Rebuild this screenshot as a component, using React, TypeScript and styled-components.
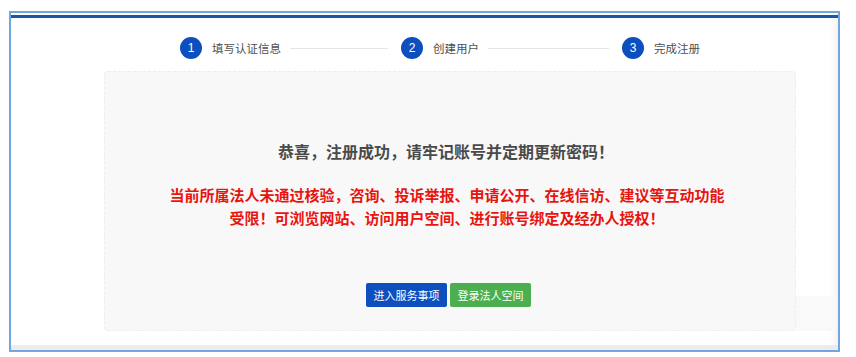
import {FC} from 'react';
import styled, {createGlobalStyle} from 'styled-components';

const GlobalStyle = createGlobalStyle`
    html, body {
        margin: 0;
        padding: 0;
        background: #ffffff;
        font-family: "Noto Sans CJK SC", "Liberation Sans", sans-serif;
    }
`;

// ramka strony
const Frame = styled.div`
    box-sizing: border-box;
    width: 831px;
    height: 341px;
    margin: 11px 0 0 9px;
    border: 2px solid #72a7de;
    background: #ffffff;
    box-shadow: inset -10px 0 10px -8px rgba(0, 0, 0, 0.07);
    display: flex;
    flex-direction: column;
    padding-top: 2px;
`;

const TopBar = styled.div`
    height: 3px;
    background: #1d56a6;
`;

// kroki rejestracji
const Steps = styled.div`
    display: flex;
    align-items: center;
    height: 22px;
    margin-top: 19px;
    padding-left: 169px;
`;

const Step = styled.div<{$last?: boolean}>`
    display: flex;
    align-items: center;
    width: ${p => (p.$last ? 'auto' : '221px')};
`;

const Circle = styled.span`
    width: 22px;
    height: 22px;
    border-radius: 50%;
    background: #0d4fbe;
    color: #ffffff;
    font-family: "Liberation Sans", Arial, sans-serif;
    font-size: 12px;
    display: flex;
    align-items: center;
    justify-content: center;
    flex-shrink: 0;
`;

const StepLabel = styled.span`
    margin-left: 10px;
    font-size: 11.5px;
    color: #4f4f4f;
    white-space: nowrap;
`;

const StepLine = styled.span`
    flex: 1;
    height: 1px;
    background: #e6e6e6;
    margin: 0 13px 0 9px;
`;

// karta z komunikatem
const Body = styled.div`
    display: flex;
    margin-top: 12px;
    padding-left: 93px;
`;

const Card = styled.div`
    box-sizing: border-box;
    width: 692px;
    height: 260px;
    background: #f8f8f8;
    border: 1px dashed #ededed;
    border-radius: 4px;
    display: flex;
    flex-direction: column;
    align-items: center;
    padding-top: 67px;
`;

const Tail = styled.div`
    width: 37px;
    display: flex;
    flex-direction: column;
    justify-content: flex-end;
    div {
        height: 35px;
        background: #f9f9f9;
    }
`;

const Title = styled.div`
    font-size: 16px;
    line-height: 24px;
    font-weight: 700;
    color: #4a4a4a;
    margin-right: 8px;
`;

const Warning = styled.div`
    margin-top: 20px;
    font-size: 15px;
    line-height: 23px;
    font-weight: 700;
    color: #e8140f;
    text-align: center;
    margin-right: 6px;
`;

const Buttons = styled.div`
    display: flex;
    gap: 3px;
    margin-top: 54px;
    margin-right: 3px;
`;

const Button = styled.button<{$color: string}>`
    width: 81px;
    height: 24px;
    border: none;
    border-radius: 2px;
    background: ${p => p.$color};
    color: #ffffff;
    font-family: "Noto Sans CJK SC", sans-serif;
    font-size: 11px;
    padding: 0;
    cursor: pointer;
`;

const BottomGap = styled.div`
    height: 14px;
`;

const BottomStrip = styled.div`
    height: 5px;
    background: #ececec;
`;

const steps = ['填写认证信息', '创建用户', '完成注册'];

const App: FC = () => {
    return (
        <>
            <GlobalStyle />
            <Frame>
                <TopBar />
                <Steps>
                    {steps.map((s, i) => (
                        <Step key={s} $last={i === steps.length - 1}>
                            <Circle>{i + 1}</Circle>
                            <StepLabel>{s}</StepLabel>
                            {i < steps.length - 1 && <StepLine />}
                        </Step>
                    ))}
                </Steps>
                <Body>
                    <Card>
                        <Title>恭喜，注册成功，请牢记账号并定期更新密码！</Title>
                        <Warning>
                            当前所属法人未通过核验，咨询、投诉举报、申请公开、在线信访、建议等互动功能
                            <br />
                            受限！可浏览网站、访问用户空间、进行账号绑定及经办人授权！
                        </Warning>
                        <Buttons>
                            <Button $color="#0d4fbe">进入服务事项</Button>
                            <Button $color="#4caf4f">登录法人空间</Button>
                        </Buttons>
                    </Card>
                    <Tail><div /></Tail>
                </Body>
                <BottomGap />
                <BottomStrip />
            </Frame>
        </>
    );
};

export default App;
